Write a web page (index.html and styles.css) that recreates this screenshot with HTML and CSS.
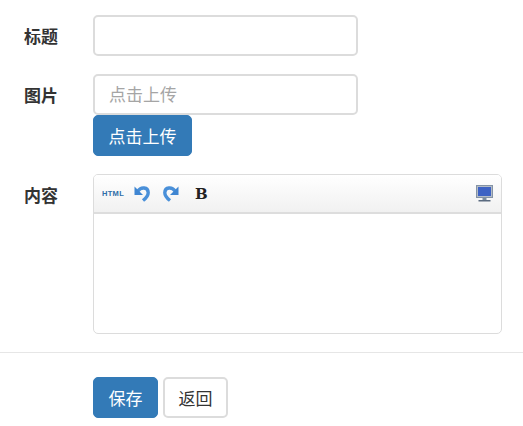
FILE: index.html
```html
<!DOCTYPE html>
<html lang="zh-CN">
<head>
  <meta charset="UTF-8">
  <meta name="viewport" content="width=device-width, initial-scale=1.0">
  <title>编辑</title>
  <link rel="stylesheet" href="styles.css">
</head>
<body>

<form class="edit-form">
  <div class="form-row">
    <label class="row-label" for="title">标题</label>
    <div class="row-field">
      <input class="text-input" type="text" id="title">
    </div>
  </div>

  <div class="form-row">
    <label class="row-label" for="pic">图片</label>
    <div class="row-field">
      <input class="text-input" type="text" id="pic" placeholder="点击上传">
      <button class="btn btn-primary upload-button" type="button">点击上传</button>
    </div>
  </div>

  <div class="form-row">
    <label class="row-label">内容</label>
    <div class="editor">
      <div class="editor-toolbar">
        <span class="html-icon">HTML</span>
        <svg class="tool-icon" width="16" height="17" viewBox="0 0 16 17">
          <path d="M4 6 C7 1.5 14 2 14.2 7.5 C14.3 11 11.5 13.5 9 15.5" fill="none" stroke="#4a90d9" stroke-width="3.4"/>
          <path d="M0.5 1.5 L0.5 10 L9 10 Z" fill="#3f86d2"/>
        </svg>
        <svg class="tool-icon redo-icon" width="16" height="17" viewBox="0 0 16 17">
          <path d="M12 6 C9 1.5 2 2 1.8 7.5 C1.7 11 4.5 13.5 7 15.5" fill="none" stroke="#4a90d9" stroke-width="3.4"/>
          <path d="M15.5 1.5 L15.5 10 L7 10 Z" fill="#3f86d2"/>
        </svg>
        <span class="bold-icon">B</span>
        <svg class="screen-icon" width="17" height="17" viewBox="0 0 17 17">
          <rect x="0.5" y="0.5" width="16" height="12" fill="#b4bcc6" stroke="#8493a5"/>
          <rect x="2" y="2" width="13" height="9" fill="#3d62c4"/>
          <rect x="6.5" y="13" width="4" height="2" fill="#7d8da0"/>
          <rect x="2.5" y="15" width="12" height="1.5" fill="#5b6b80"/>
        </svg>
      </div>
      <div class="editor-body"></div>
    </div>
  </div>

  <div class="form-actions">
    <button class="btn btn-primary action-button" type="button">保存</button>
    <button class="btn btn-default action-button" type="button">返回</button>
  </div>
</form>

</body>
</html>
```

FILE: styles.css
```css
body {
  margin: 0;
  padding: 0;
  background-color: #ffffff;
  color: #333333;
  font-family: "Liberation Sans", "Noto Sans CJK SC", sans-serif;
  font-size: 17px;
}

.edit-form {
  padding-top: 15px;
}

.form-row {
  display: flex;
  margin-bottom: 18px;
}

.row-label {
  width: 69px;
  height: 41px;
  margin-left: 24px;
  font-weight: bold;
  line-height: 46px;
}

.row-field {
  width: 265px;
}

.text-input {
  display: block;
  box-sizing: border-box;
  width: 100%;
  height: 41px;
  padding: 3px 14px 0;
  border: 2px solid #dcdcdc;
  border-radius: 5px;
  font-family: inherit;
  font-size: 17px;
}

.text-input::placeholder {
  color: #a5a5a5;
}

.btn {
  box-sizing: border-box;
  height: 41px;
  padding: 0;
  border-radius: 5px;
  font-family: inherit;
  font-size: 17px;
  white-space: nowrap;
}

.btn-primary {
  color: #ffffff;
  background-color: #337ab7;
  border: 1px solid #337ab7;
}

.btn-default {
  color: #333333;
  background-color: #ffffff;
  border: 2px solid #dcdcdc;
}

.upload-button {
  display: block;
  width: 99px;
}

.action-button {
  width: 65px;
}

.editor {
  box-sizing: border-box;
  width: 409px;
  height: 160px;
  border: 1px solid #dcdcdc;
  border-radius: 5px;
  overflow: hidden;
}

.editor-toolbar {
  display: flex;
  align-items: center;
  height: 37px;
  padding: 0 8px 0 8px;
  background: linear-gradient(#ffffff, #f1f1f1);
  border-bottom: 2px solid #dddddd;
}

.html-icon {
  width: 21px;
  color: #2f6ea8;
  font-size: 7.5px;
  font-weight: bold;
  letter-spacing: 0.3px;
}

.tool-icon {
  margin-left: 11px;
}

.redo-icon {
  margin-left: 13px;
}

.bold-icon {
  margin-left: 16px;
  color: #222222;
  font-family: "DejaVu Serif", serif;
  font-size: 15px;
  font-weight: bold;
}

.screen-icon {
  margin-left: auto;
}

.form-actions {
  display: flex;
  gap: 5px;
  padding: 24px 0 0 93px;
  border-top: 1px solid #e6e6e6;
}
```
